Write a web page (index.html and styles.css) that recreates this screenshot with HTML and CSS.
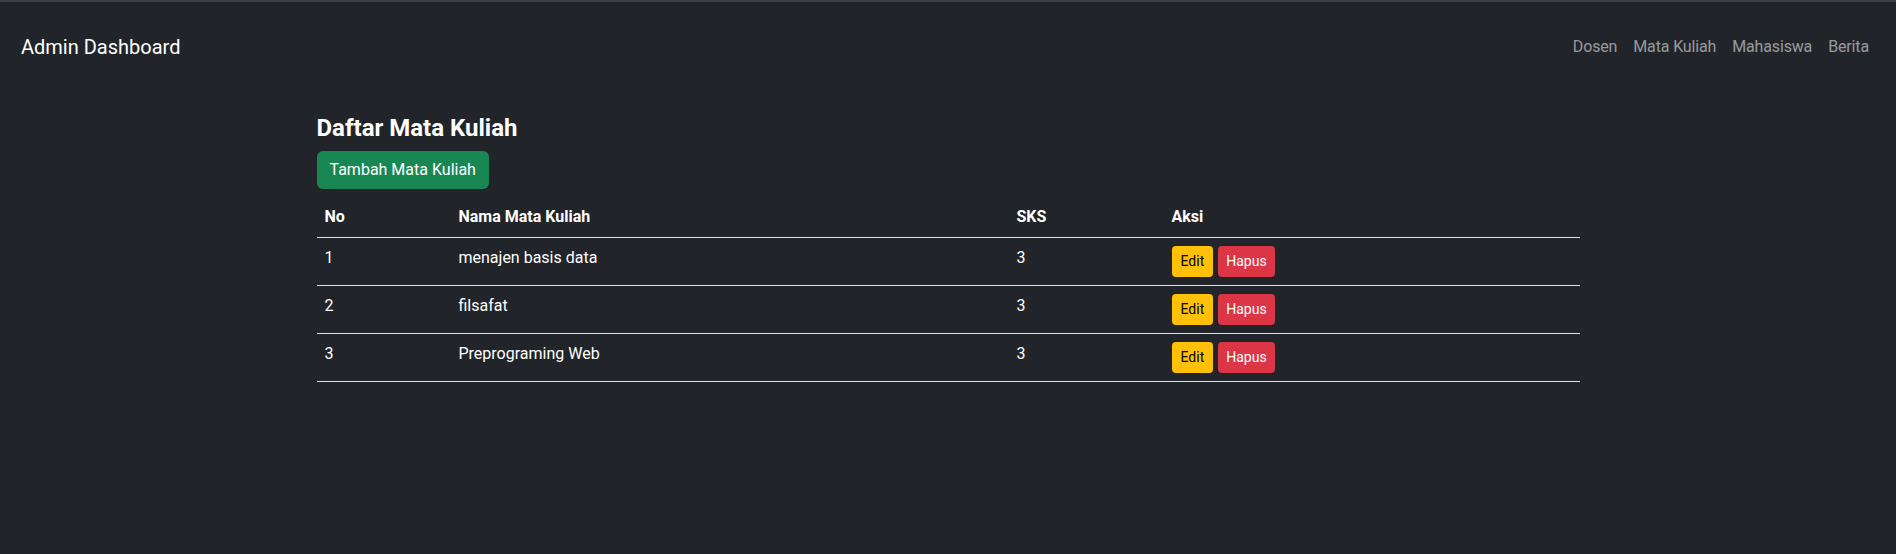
FILE: index.html
```html
<!DOCTYPE html>
<html lang="id">
<head>
<meta charset="utf-8">
<title>Admin Dashboard</title>
<link rel="stylesheet" href="styles.css">
</head>
<body>
<nav class="navbar">
  <a class="brand" href="#">Admin Dashboard</a>
  <ul class="nav">
    <li><a href="#">Dosen</a></li>
    <li><a href="#">Mata Kuliah</a></li>
    <li><a href="#">Mahasiswa</a></li>
    <li><a href="#">Berita</a></li>
  </ul>
</nav>
<main class="container">
  <h4 class="title">Daftar Mata Kuliah</h4>
  <a class="btn btn-success" href="#">Tambah Mata Kuliah</a>
  <table class="table">
    <colgroup>
      <col class="c-no"><col class="c-nama"><col class="c-sks"><col class="c-aksi">
    </colgroup>
    <thead>
      <tr><th>No</th><th>Nama Mata Kuliah</th><th>SKS</th><th>Aksi</th></tr>
    </thead>
    <tbody>
      <tr><td>1</td><td>menajen basis data</td><td>3</td><td class="actions"><a class="btn-sm btn-warning" href="#">Edit</a><a class="btn-sm btn-danger" href="#">Hapus</a></td></tr>
      <tr><td>2</td><td>filsafat</td><td>3</td><td class="actions"><a class="btn-sm btn-warning" href="#">Edit</a><a class="btn-sm btn-danger" href="#">Hapus</a></td></tr>
      <tr><td>3</td><td>Preprograming Web</td><td>3</td><td class="actions"><a class="btn-sm btn-warning" href="#">Edit</a><a class="btn-sm btn-danger" href="#">Hapus</a></td></tr>
    </tbody>
  </table>
</main>
</body>
</html>
```

FILE: styles.css
```css
* { box-sizing: border-box; }
html, body { height: 100%; }
body {
  margin: 0;
  background: #212529;
  color: #fff;
  font-family: Roboto, "Open Sans", sans-serif;
  font-size: 16px;
  line-height: 1.5;
  border-top: 2px solid #3a3d41;
}
a { text-decoration: none; }

.navbar {
  display: flex;
  align-items: center;
  justify-content: space-between;
  padding: 30px 19px 30px 21px;
}
.brand {
  color: #fff;
  font-size: 20px;
  line-height: 30px;
}
.nav {
  display: flex;
  list-style: none;
  margin: 0;
  padding: 0;
}
.nav a {
  display: block;
  padding: 3px 8px;
  color: rgba(255, 255, 255, 0.55);
  line-height: 24px;
  letter-spacing: -0.15px;
}

.container {
  max-width: 1263px;
  margin: 22px auto 0;
}
.title {
  margin: 0 0 8px;
  font-size: 24px;
  font-weight: 700;
  line-height: 1.2;
}
.btn {
  display: inline-block;
  padding: 6px 12px;
  border-radius: 6px;
  font-size: 16px;
  line-height: 24px;
  border: 1px solid transparent;
}
.btn-success { background: #198754; color: #fff; }

.table {
  width: 100%;
  margin-top: 8px;
  border-collapse: collapse;
  table-layout: fixed;
}
.c-no { width: 134px; }
.c-nama { width: 558px; }
.c-sks { width: 155px; }
.table th, .table td {
  text-align: left;
  vertical-align: top;
  padding: 8px;
  border-bottom: 1px solid #dee2e6;
  line-height: 24px;
}
.table th { font-weight: 700; }
.actions { display: flex; gap: 5px; }
.btn-sm {
  display: inline-block;
  padding: 3px 8px;
  border: 1px solid transparent;
  border-radius: 4px;
  font-size: 14px;
  line-height: 23px;
}
.btn-warning { background: #ffc107; color: #000; }
.btn-danger { background: #dc3545; color: #fff; padding: 3px 7px; }
```
